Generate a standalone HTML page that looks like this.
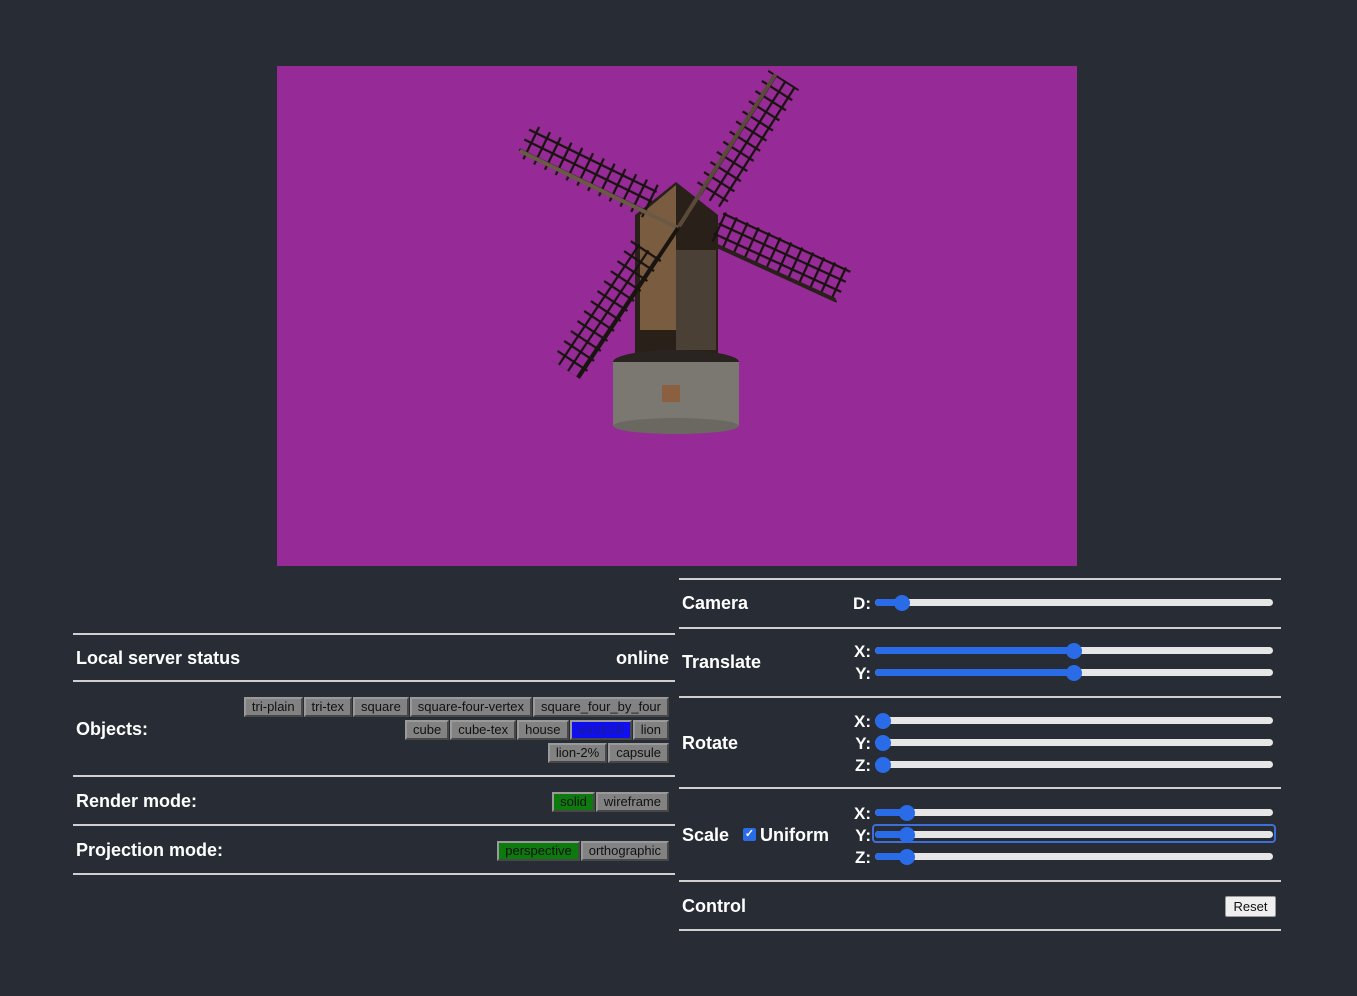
<!DOCTYPE html>
<html><head><meta charset="utf-8"><style>
*{box-sizing:border-box;margin:0;padding:0}
body{width:1357px;height:996px;background:#282c34;position:relative;overflow:hidden;font-family:"Liberation Sans",sans-serif;color:#fff}
.a{position:absolute}
.hl{position:absolute;height:2px;background:#d0d0d0}
.lb{position:absolute;font-weight:bold;font-size:18px;line-height:20px}
.row{position:absolute;right:688px;display:flex;gap:0}
.b{height:20px;font-size:13px;line-height:16px;padding:0 6px;background:#828282;color:#111;border:2px solid;border-color:#9a9a9a #474747 #474747 #9a9a9a;margin-left:1px}
.tr{position:absolute;left:875px;width:398px;height:7px;border-radius:4px;background:#e6e6e6}
.fl{position:absolute;left:0;top:0;height:7px;border-radius:4px;background:#2a6ce8}
.th{position:absolute;width:16px;height:16px;border-radius:50%;background:#2a6ce8;top:-4.5px}
.sl{position:absolute;font-weight:bold;font-size:17px;width:40px;text-align:right;left:831px}
</style></head><body>
<div class="a" style="left:277px;top:66px;width:800px;height:500px;background:#962b97"></div>
<svg class="a" style="left:0;top:0" width="1357" height="600">
<defs><pattern id="g" width="12" height="11" patternUnits="userSpaceOnUse"><path d="M0 1H12M1 0V11" stroke="#1a1210" stroke-width="2.5" fill="none"/></pattern></defs>
<!-- building -->
<polygon points="635,215 676,182 718,215 718,355 635,355" fill="#2a201a"/>
<polygon points="640,215 676,185 676,330 640,330" fill="#7a5c40"/>
<rect x="676" y="250" width="40" height="100" fill="#4a4036"/>
<!-- base -->
<ellipse cx="676" cy="362" rx="63" ry="12" fill="#2a2420"/>
<rect x="613" y="362" width="126" height="64" fill="#7a7870"/>
<ellipse cx="676" cy="426" rx="63" ry="8" fill="#6a6860"/>
<rect x="662" y="385" width="18" height="17" fill="#8a6040"/>
<!-- sails -->
<g transform="translate(678,228)">
<g transform="rotate(-57.6)"><rect x="40" y="-8" width="142" height="36" fill="url(#g)"/><line x1="0" y1="0" x2="182" y2="0" stroke="#5a4a3a" stroke-width="4"/></g>
<g transform="rotate(-154)"><rect x="35" y="-6" width="142" height="36" fill="url(#g)"/><line x1="0" y1="0" x2="176" y2="0" stroke="#6a5a45" stroke-width="4"/></g>
<g transform="rotate(24.6)"><rect x="35" y="-34" width="140" height="36" fill="url(#g)"/><line x1="0" y1="0" x2="173" y2="0" stroke="#2a201a" stroke-width="4"/></g>
<g transform="rotate(123.7)"><rect x="35" y="-4" width="145" height="36" fill="url(#g)"/><line x1="0" y1="0" x2="180" y2="0" stroke="#1a1410" stroke-width="4"/></g>
</g>
</svg>

<div class="hl" style="left:679px;top:578px;width:602px"></div>
<div class="hl" style="left:679px;top:627px;width:602px"></div>
<div class="hl" style="left:679px;top:696px;width:602px"></div>
<div class="hl" style="left:679px;top:787px;width:602px"></div>
<div class="hl" style="left:679px;top:880px;width:602px"></div>
<div class="hl" style="left:679px;top:929px;width:602px"></div>

<div class="hl" style="left:73px;top:633px;width:602px"></div>
<div class="hl" style="left:73px;top:680px;width:602px"></div>
<div class="hl" style="left:73px;top:775px;width:602px"></div>
<div class="hl" style="left:73px;top:824px;width:602px"></div>
<div class="hl" style="left:73px;top:873px;width:602px"></div>

<div class="lb" style="left:76px;top:648px">Local server status</div>
<div class="lb" style="left:560px;top:648px;width:109px;text-align:right">online</div>
<div class="lb" style="left:76px;top:719px">Objects:</div>
<div class="lb" style="left:76px;top:791px">Render mode:</div>
<div class="lb" style="left:76px;top:840px">Projection mode:</div>

<div class="row" style="top:697px"><div class="b">tri-plain</div><div class="b">tri-tex</div><div class="b">square</div><div class="b">square-four-vertex</div><div class="b">square_four_by_four</div></div>
<div class="row" style="top:720px"><div class="b">cube</div><div class="b">cube-tex</div><div class="b">house</div><div class="b" style="background:#1010ee;color:#1a1a90">windmill</div><div class="b">lion</div></div>
<div class="row" style="top:743px"><div class="b">lion-2%</div><div class="b">capsule</div></div>
<div class="row" style="top:792px"><div class="b" style="background:#0c7a0c">solid</div><div class="b">wireframe</div></div>
<div class="row" style="top:841px"><div class="b" style="background:#0c7a0c">perspective</div><div class="b">orthographic</div></div>

<div class="lb" style="left:682px;top:593px">Camera</div>
<div class="lb" style="left:682px;top:652px">Translate</div>
<div class="lb" style="left:682px;top:733px">Rotate</div>
<div class="lb" style="left:682px;top:825px">Scale</div>
<div class="a" style="left:743px;top:828px;width:13px;height:13px;background:#2a6ce8;border-radius:2px;color:#fff;font-size:11px;line-height:13px;text-align:center;font-weight:bold">✓</div>
<div class="lb" style="left:760px;top:825px">Uniform</div>
<div class="lb" style="left:682px;top:896px">Control</div>
<div class="a" style="left:1225px;top:896px;width:51px;height:21px;background:#efefef;border:1px solid #999;border-radius:2px;color:#111;font-size:13px;line-height:19px;text-align:center">Reset</div>

<div class="sl" style="top:594px">D:</div>
<div class="tr" style="top:599px"><div class="fl" style="width:27px"></div><div class="th" style="left:19px"></div></div>
<div class="sl" style="top:642px">X:</div>
<div class="tr" style="top:647px"><div class="fl" style="width:199px"></div><div class="th" style="left:191px"></div></div>
<div class="sl" style="top:664px">Y:</div>
<div class="tr" style="top:669px"><div class="fl" style="width:199px"></div><div class="th" style="left:191px"></div></div>
<div class="sl" style="top:712px">X:</div>
<div class="tr" style="top:717px"><div class="th" style="left:0"></div></div>
<div class="sl" style="top:734px">Y:</div>
<div class="tr" style="top:739px"><div class="th" style="left:0"></div></div>
<div class="sl" style="top:756px">Z:</div>
<div class="tr" style="top:761px"><div class="th" style="left:0"></div></div>
<div class="sl" style="top:804px">X:</div>
<div class="tr" style="top:809px"><div class="fl" style="width:32px"></div><div class="th" style="left:24px"></div></div>
<div class="sl" style="top:826px">Y:</div>
<div class="a" style="left:872px;top:824px;width:404px;height:19px;border:2px solid #3d6fd8;border-radius:4px"></div>
<div class="tr" style="top:831px"><div class="fl" style="width:32px"></div><div class="th" style="left:24px"></div></div>
<div class="sl" style="top:848px">Z:</div>
<div class="tr" style="top:853px"><div class="fl" style="width:32px"></div><div class="th" style="left:24px"></div></div>
</body></html>
